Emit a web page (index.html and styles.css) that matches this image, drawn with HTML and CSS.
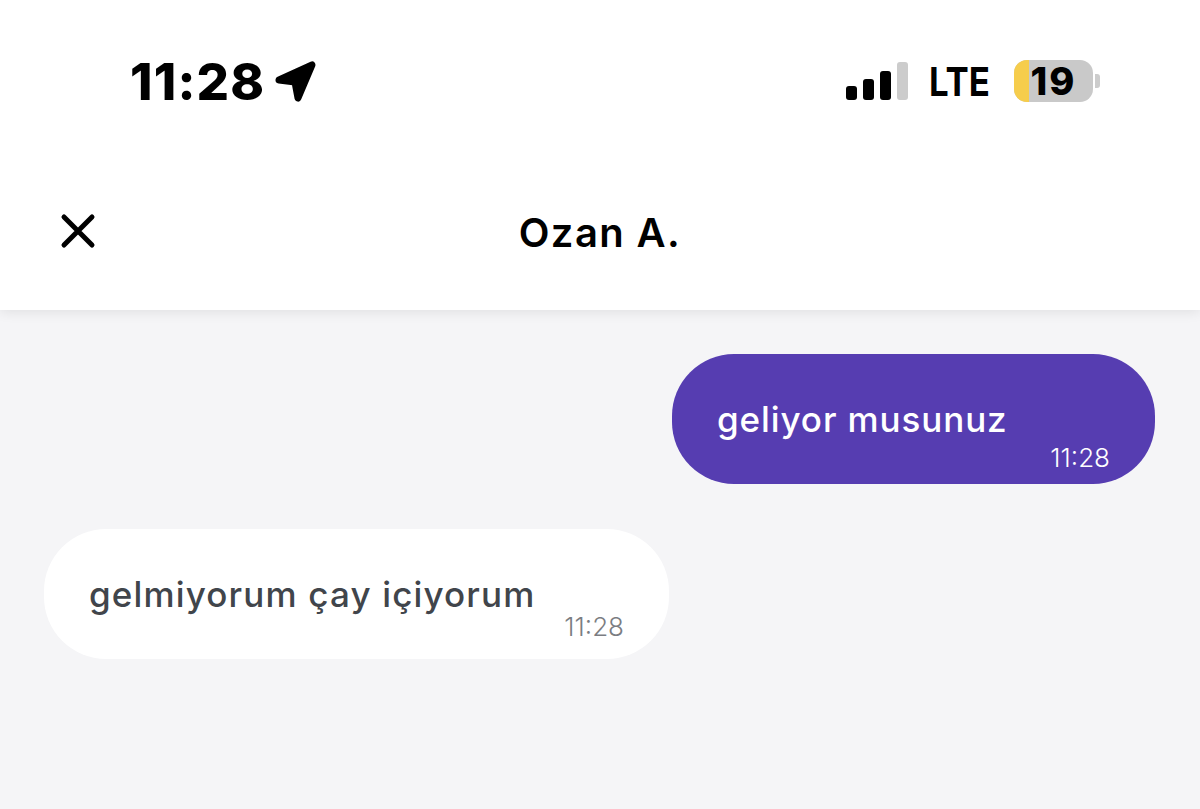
FILE: index.html
```html
<!DOCTYPE html>
<html lang="en">
<head>
  <meta charset="UTF-8">
  <meta name="viewport" content="width=device-width, initial-scale=1.0">
  <title>Ozan A.</title>
  <link rel="stylesheet" href="styles.css">
</head>
<body>
  <div class="top">
    <!-- Status bar -->
    <div class="status-bar">
      <div class="status-left">
        <span class="clock">11:28</span>
        <svg class="location" width="44" height="44" viewBox="0 0 44 44">
          <path d="M5 21 L38 6 L24 39 L21 23 Z" fill="#000" stroke="#000" stroke-width="7" stroke-linejoin="round"/>
        </svg>
      </div>
      <div class="status-right">
        <div class="signal">
          <span class="bar bar-1"></span>
          <span class="bar bar-2"></span>
          <span class="bar bar-3"></span>
          <span class="bar bar-4"></span>
        </div>
        <span class="network">LTE</span>
        <div class="battery">
          <div class="battery-body">
            <span class="battery-fill"></span>
            <span class="battery-level">19</span>
          </div>
          <span class="battery-cap"></span>
        </div>
      </div>
    </div>

    <!-- Chat header -->
    <div class="chat-header">
      <svg class="close" width="36" height="36" viewBox="0 0 36 36">
        <path d="M4 4 L32 32 M32 4 L4 32" stroke="#000" stroke-width="5" stroke-linecap="round" fill="none"/>
      </svg>
      <h1>Ozan A.</h1>
    </div>
  </div>

  <!-- Messages -->
  <div class="messages">
    <div class="bubble sent">
      <p>geliyor musunuz</p>
      <span class="time">11:28</span>
    </div>
    <div class="bubble received">
      <p>gelmiyorum çay içiyorum</p>
      <span class="time">11:28</span>
    </div>
  </div>
</body>
</html>
```

FILE: styles.css
```css
* {
  margin: 0;
  padding: 0;
  box-sizing: border-box;
}

body {
  width: 1200px;
  height: 809px;
  overflow: hidden;
  font-family: "Inter", "Open Sans", sans-serif;
  background-color: #f5f5f7;
  color: #000;
}

.top {
  position: relative;
  height: 310px;
  background-color: #fff;
  box-shadow: 0 2px 12px rgba(0, 0, 0, 0.09);
}

.status-bar {
  height: 162px;
  padding: 0 100px 0 130px;
  display: flex;
  justify-content: space-between;
  align-items: center;
}

.status-left {
  display: flex;
  align-items: center;
  gap: 9px;
}

.clock {
  font-size: 51px;
  font-weight: 800;
  letter-spacing: 1.2px;
}

.location {
  display: block;
}

.status-right {
  display: flex;
  align-items: center;
}

.signal {
  display: flex;
  align-items: flex-end;
  gap: 6px;
  height: 38px;
}

.bar {
  width: 11px;
  border-radius: 3px;
  background-color: #000;
}

.bar-1 { height: 14px; }
.bar-2 { height: 21px; }
.bar-3 { height: 29px; }
.bar-4 { height: 38px; background-color: #ccc; }

.network {
  margin-left: 21px;
  font-size: 40px;
  font-weight: 700;
  transform: scaleX(0.87);
  transform-origin: left center;
  width: 62px;
}

.battery {
  margin-left: 23px;
  display: flex;
  align-items: center;
}

.battery-body {
  position: relative;
  width: 79px;
  height: 42px;
  border-radius: 13px;
  background-color: #c9c9c9;
  display: flex;
  align-items: center;
  justify-content: center;
}

.battery-fill {
  position: absolute;
  left: 0;
  top: 0;
  bottom: 0;
  width: 15px;
  border-radius: 13px 0 0 13px;
  background-color: #f6cd4c;
}

.battery-level {
  position: relative;
  font-size: 38px;
  font-weight: 800;
  line-height: 1;
  letter-spacing: 2px;
}

.battery-cap {
  width: 5px;
  height: 14px;
  margin-left: 2px;
  border-radius: 0 3px 3px 0;
  background-color: #ccc;
}

.chat-header {
  position: relative;
  height: 148px;
  display: flex;
  align-items: center;
  justify-content: center;
}

.chat-header h1 {
  font-size: 40px;
  font-weight: 600;
  letter-spacing: 1.4px;
  line-height: 1;
  margin-bottom: 6px;
}

.close {
  position: absolute;
  left: 60px;
  top: 51px;
}

.messages {
  padding: 44px 45px 0 44px;
  display: flex;
  flex-direction: column;
  gap: 45px;
}

.bubble {
  height: 130px;
  border-radius: 62px;
  padding: 45px 45px 0 45px;
}

.bubble p {
  font-size: 35px;
  font-weight: 500;
  line-height: 40px;
  letter-spacing: 0.9px;
}

.time {
  display: block;
  text-align: right;
  font-size: 26px;
  font-weight: 300;
  line-height: 34px;
}

.sent {
  align-self: flex-end;
  width: 483px;
  background-color: #563db1;
  color: #fff;
}

.sent .time {
  margin-top: 2px;
}

.received {
  align-self: flex-start;
  width: 625px;
  background-color: #fff;
  color: #41454b;
}

.received p {
  letter-spacing: 1.15px;
}

.received .time {
  margin-top: -4px;
  color: #7b7d82;
}
```
